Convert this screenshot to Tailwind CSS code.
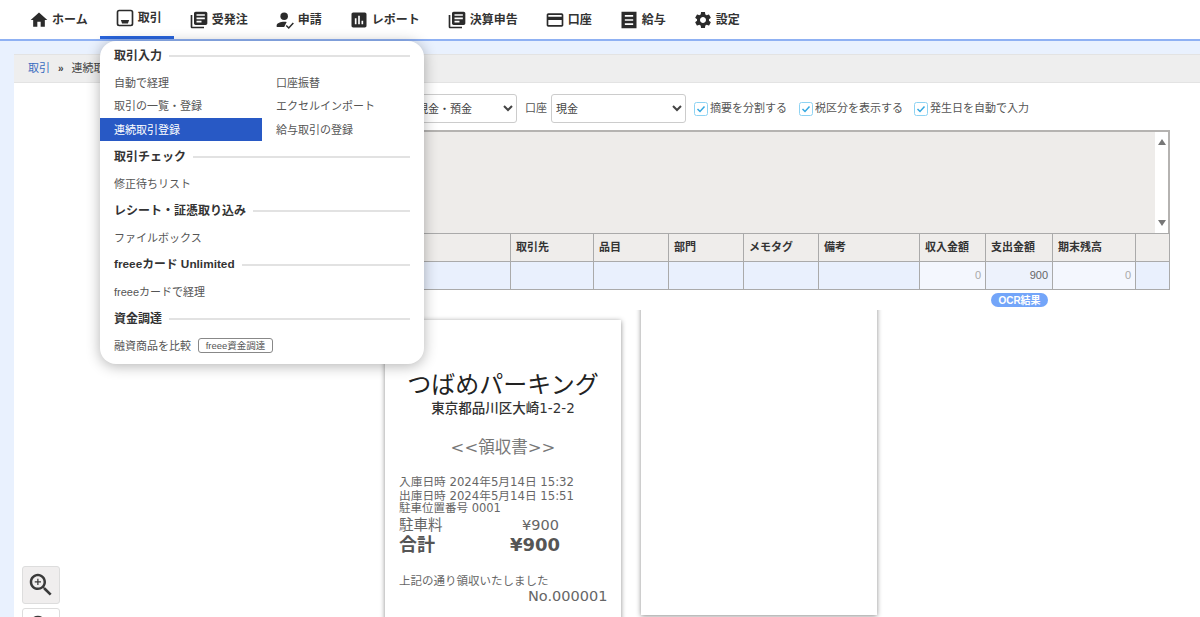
<!DOCTYPE html>
<html lang="ja">
<head>
    <meta charset="UTF-8">
    <title>連続取引登録</title>
    <script src="https://cdn.jsdelivr.net/npm/@tailwindcss/browser@4"></script>
</head>
<body class="relative h-[617px] overflow-hidden bg-[#e9f1fe] text-[11px] text-[#555] font-['Liberation_Sans','Noto_Sans_CJK_JP',sans-serif]">
    <!-- Global nav -->
    <nav class="flex h-[41px] bg-white pl-[14px] border-b-2 border-[#8fb1f3] text-xs font-bold text-[#333]">
        <a class="flex h-[39px] items-center gap-1 pl-4 pr-3">
            <svg class="w-5 h-5 -mx-px" viewBox="0 0 24 24" fill="#2b2b2b"><path d="M10 20v-6h4v6h5v-8h3L12 3 2 12h3v8z"/></svg>
            ホーム
        </a>
        <a class="flex h-[39px] items-center gap-1 pl-4 pr-3 border-b-[3px] border-[#2864dc]">
            <svg class="w-5 h-5 -mx-px" viewBox="0 0 24 24" fill="#2b2b2b"><path fill-rule="evenodd" d="M5 2h14a3 3 0 0 1 3 3v14a3 3 0 0 1-3 3H5a3 3 0 0 1-3-3V5a3 3 0 0 1 3-3zm0 2a1 1 0 0 0-1 1v14a1 1 0 0 0 1 1h14a1 1 0 0 0 1-1V5a1 1 0 0 0-1-1z"/><path d="M7 14.500h10l-1.500 4h-7z"/></svg>
            取引
        </a>
        <a class="flex h-[39px] items-center gap-1 pl-4 pr-3">
            <svg class="w-5 h-5 -mx-px" viewBox="0 0 24 24" fill="#2b2b2b"><path d="M4 6H2v14c0 1.100.9 2 2 2h14v-2H4V6zm16-4H8c-1.100 0-2 .9-2 2v12c0 1.100.9 2 2 2h12c1.100 0 2-.9 2-2V4c0-1.100-.9-2-2-2zm-1 9H9V9h10v2zm-4 4H9v-2h6v2zm4-8H9V5h10v2z"/></svg>
            受発注
        </a>
        <a class="flex h-[39px] items-center gap-1 pl-4 pr-3">
            <svg class="w-5 h-5 -mx-px" viewBox="0 0 24 24" fill="#2b2b2b"><circle cx="11" cy="7.500" r="4.500"/><path d="M2 20.500v-2c0-3 5-4.500 9-4.500 1 0 2 .1 3 .3l-3 6.200z"/><path d="M13.500 18.500l3 3 5.500-6" fill="none" stroke="#2b2b2b" stroke-width="1.800"/></svg>
            申請
        </a>
        <a class="flex h-[39px] items-center gap-1 pl-4 pr-3">
            <svg class="w-5 h-5 -mx-px" viewBox="0 0 24 24" fill="#2b2b2b"><path d="M19 3H5c-1.100 0-2 .9-2 2v14c0 1.100.9 2 2 2h14c1.100 0 2-.9 2-2V5c0-1.100-.9-2-2-2zM9 17H7v-7h2v7zm4 0h-2V7h2v10zm4 0h-2v-4h2v4z"/></svg>
            レポート
        </a>
        <a class="flex h-[39px] items-center gap-1 pl-4 pr-3">
            <svg class="w-5 h-5 -mx-px" viewBox="0 0 24 24" fill="#2b2b2b"><path d="M4 6H2v14c0 1.100.9 2 2 2h14v-2H4V6zm16-4H8c-1.100 0-2 .9-2 2v12c0 1.100.9 2 2 2h12c1.100 0 2-.9 2-2V4c0-1.100-.9-2-2-2zm-1 9H9V9h10v2zm-4 4H9v-2h6v2zm4-8H9V5h10v2z"/></svg>
            決算申告
        </a>
        <a class="flex h-[39px] items-center gap-1 pl-4 pr-3">
            <svg class="w-5 h-5 -mx-px" viewBox="0 0 24 24" fill="#2b2b2b"><path d="M20 4H4c-1.110 0-1.990.89-1.990 2L2 18c0 1.110.89 2 2 2h16c1.110 0 2-.89 2-2V6c0-1.110-.89-2-2-2zm0 14H4v-6h16v6zm0-10H4V6h16v2z"/></svg>
            口座
        </a>
        <a class="flex h-[39px] items-center gap-1 pl-4 pr-3">
            <svg class="w-5 h-5 -mx-px" viewBox="0 0 24 24" fill="#2b2b2b"><path fill-rule="evenodd" d="M3 2h18v20H3zm4 4v2h10V6zm0 5v2h10v-2zm0 5v2h10v-2z"/></svg>
            給与
        </a>
        <a class="flex h-[39px] items-center gap-1 pl-4 pr-3">
            <svg class="w-5 h-5 -mx-px" viewBox="0 0 24 24" fill="#2b2b2b"><path d="M19.140 12.940c.04-.3.06-.61.06-.94 0-.32-.02-.64-.07-.94l2.030-1.580c.18-.14.23-.41.12-.61l-1.920-3.320c-.12-.22-.37-.29-.59-.22l-2.390.96c-.5-.38-1.030-.7-1.620-.94l-.36-2.540c-.04-.24-.24-.41-.48-.41h-3.840c-.24 0-.43.17-.47.41l-.36 2.540c-.59.24-1.130.57-1.620.94l-2.390-.96c-.22-.08-.47 0-.59.22L2.740 8.870c-.12.21-.08.47.12.61l2.030 1.580c-.05.3-.09.63-.09.94s.02.64.07.94l-2.030 1.580c-.18.14-.23.41-.12.61l1.920 3.320c.12.22.37.29.59.22l2.390-.96c.5.38 1.030.7 1.620.94l.36 2.540c.05.24.24.41.48.41h3.840c.24 0 .44-.17.47-.41l.36-2.540c.59-.24 1.130-.56 1.620-.94l2.390.96c.22.08.47 0 .59-.22l1.920-3.320c.12-.22.07-.47-.12-.61l-2.010-1.580zM12 15.600c-1.980 0-3.600-1.620-3.600-3.600s1.620-3.600 3.600-3.600 3.600 1.620 3.600 3.600-1.620 3.600-3.600 3.600z"/></svg>
            設定
        </a>
    </nav>

    <!-- Page card -->
    <main class="ml-[14px] mt-[13px] h-[563px] bg-white overflow-hidden">
        <div class="flex h-[29px] items-center gap-[8px] pl-[14px] bg-[#eeeeee] border-t border-b border-[#e3e3e3] text-[#444]">
            <a class="text-[#3a6cc0]">取引</a>
            <span class="text-[10px] font-bold">»</span>
            <span>連続取引登録</span>
        </div>

        <div class="ml-[130px]">
            <!-- Filters -->
            <div class="flex h-[29px] mt-[11px] items-center">
                <select class="ml-[260px] w-[113px] h-[29px] pl-2 bg-white border border-[#ccc] rounded-[3px] text-[#444]"><option>現金・預金</option></select>
                <span class="ml-2 w-[26px]">口座</span>
                <select class="w-[135px] h-[29px] pl-0 bg-white border border-[#ccc] rounded-[3px] text-[#444]"><option>現金</option></select>
                <label class="flex items-center ml-2 w-[105px]">
                    <svg class="w-[14px] h-[14px] mr-[2px]" viewBox="0 0 14 14"><rect x=".5" y=".5" width="13" height="13" rx="2" fill="#fff" stroke="#8ed3f3"/><path d="M3.500 7l2.500 2.500L10.500 4.500" fill="none" stroke="#35a8e0" stroke-width="1.500"/></svg>
                    摘要を分割する
                </label>
                <label class="flex items-center w-[115px]">
                    <svg class="w-[14px] h-[14px] mr-[2px]" viewBox="0 0 14 14"><rect x=".5" y=".5" width="13" height="13" rx="2" fill="#fff" stroke="#8ed3f3"/><path d="M3.500 7l2.500 2.500L10.500 4.500" fill="none" stroke="#35a8e0" stroke-width="1.500"/></svg>
                    税区分を表示する
                </label>
                <label class="flex items-center">
                    <svg class="w-[14px] h-[14px] mr-[2px]" viewBox="0 0 14 14"><rect x=".5" y=".5" width="13" height="13" rx="2" fill="#fff" stroke="#8ed3f3"/><path d="M3.500 7l2.500 2.500L10.500 4.500" fill="none" stroke="#35a8e0" stroke-width="1.500"/></svg>
                    発生日を自動で入力
                </label>
            </div>

            <!-- Transaction list -->
            <div class="flex w-[1026px] h-[103px] mt-[7px] border-2 border-b-0 border-[#b5b3b1] bg-[#eeecea]">
                <div class="flex flex-col justify-between items-center w-[13px] ml-auto py-[7px] bg-white">
                    <span class="w-0 h-0 border-x-[4px] border-x-transparent border-b-[6px] border-b-[#777]"></span>
                    <span class="w-0 h-0 border-x-[4px] border-x-transparent border-t-[6px] border-t-[#777]"></span>
                </div>
            </div>
            <table class="w-[1026px] table-fixed border-collapse border border-[#aaa]">
                <colgroup>
                    <col class="w-[366px]"><col class="w-[83px]"><col class="w-[75px]"><col class="w-[75px]"><col class="w-[75px]"><col class="w-[101px]"><col class="w-[66px]"><col class="w-[67px]"><col class="w-[83px]"><col>
                </colgroup>
                <tr class="h-[28px] bg-[#efedeb] text-left text-[#333]">
                    <th class="border border-[#aaa] pl-[5px]"></th>
                    <th class="border border-[#aaa] pl-[5px]">取引先</th>
                    <th class="border border-[#aaa] pl-[5px]">品目</th>
                    <th class="border border-[#aaa] pl-[5px]">部門</th>
                    <th class="border border-[#aaa] pl-[5px]">メモタグ</th>
                    <th class="border border-[#aaa] pl-[5px]">備考</th>
                    <th class="border border-[#aaa] pl-[5px]">収入金額</th>
                    <th class="border border-[#aaa] pl-[5px]">支出金額</th>
                    <th class="border border-[#aaa] pl-[5px]">期末残高</th>
                    <th class="border border-[#aaa]"></th>
                </tr>
                <tr class="h-[28px] bg-[#e9f0fd] text-right">
                    <td class="border border-[#aaa]"></td>
                    <td class="border border-[#aaa]"></td>
                    <td class="border border-[#aaa]"></td>
                    <td class="border border-[#aaa]"></td>
                    <td class="border border-[#aaa]"></td>
                    <td class="border border-[#aaa]"></td>
                    <td class="border border-[#aaa] pr-1 bg-[#f4f7fe] text-[#aaa]">0</td>
                    <td class="border border-[#aaa] pr-1 bg-[#edf2fc] text-[#666]">900</td>
                    <td class="border border-[#aaa] pr-1 bg-[#f4f7fe] text-[#aaa]">0</td>
                    <td class="border border-[#aaa]"></td>
                </tr>
            </table>
            <div class="flex h-[20px] items-center pl-[847px]">
                <span class="flex w-[57px] h-[14px] items-center justify-center rounded-full bg-[#73a5f9] text-white text-[10px] font-bold">OCR結果</span>
            </div>

            <!-- Receipt preview -->
            <div class="flex h-[320px] items-start gap-5 pl-[241px] overflow-hidden font-['DejaVu_Sans','Noto_Sans_CJK_JP',sans-serif]">
                <div class="w-[236px] h-[400px] mt-[10px] bg-white shadow-[0_1px_5px_rgba(0,0,0,0.45)] text-[#666]">
                    <p class="h-[32px] mt-[49px] text-center text-[24px] leading-[32px] text-[#222]">つばめパーキング</p>
                    <p class="h-[14px] text-center text-[13.500px] leading-[14px] font-medium text-[#333]">東京都品川区大崎1-2-2</p>
                    <p class="h-[20px] mt-[23px] text-center text-[16.500px] leading-[20px] text-[#777]">&lt;&lt;領収書&gt;&gt;</p>
                    <div class="mt-[17px] pl-[14px]">
                        <p class="h-[13.500px] text-[11.700px] leading-[14px]">入庫日時 2024年5月14日 15:32</p>
                        <p class="h-[13.500px] text-[11.700px] leading-[14px]">出庫日時 2024年5月14日 15:51</p>
                        <p class="h-[13px] text-[11.500px] leading-[13px]">駐車位置番号 0001</p>
                        <p class="flex h-[21px] text-[14.500px] leading-[20px]"><span class="w-[123px]">駐車料</span>¥900</p>
                        <p class="flex h-[18px] text-[18px] leading-[18px] font-bold text-[#555]"><span class="w-[111px]">合計</span>¥900</p>
                        <p class="h-[14px] mt-[20px] text-[11.500px] leading-[14px]">上記の通り領収いたしました</p>
                        <p class="h-[20px] -mt-[2px] pl-[129px] text-[14.500px] leading-[20px]">No.000001</p>
                    </div>
                </div>
                <div class="w-[236px] h-[313px] -mt-[8px] bg-white shadow-[0_1px_5px_rgba(0,0,0,0.45)]"></div>
            </div>
        </div>
    </main>

    <!-- Preview zoom buttons -->
    <button class="absolute left-[22px] top-[566px] flex w-[38px] h-[38px] items-center justify-center bg-[#f0eeee] border border-[#ddd] rounded-[3px]">
        <svg class="w-[30px] h-[30px]" viewBox="0 0 24 24" fill="#3a3a3a"><path d="M15.500 14h-.79l-.28-.27C15.410 12.590 16 11.110 16 9.500 16 5.910 13.090 3 9.500 3S3 5.910 3 9.500 5.910 16 9.500 16c1.610 0 3.090-.59 4.230-1.570l.27.28v.79l5 4.990L20.490 19l-4.990-5zm-6 0C7.010 14 5 11.990 5 9.500S7.010 5 9.500 5 14 7.010 14 9.500 11.990 14 9.500 14zm.5-7H9v2H7v1h2v2h1v-2h2V9h-2V7z"/></svg>
    </button>
    <button class="absolute left-[22px] top-[608px] flex w-[38px] h-[38px] items-center justify-center bg-white border border-[#ddd] rounded-[3px]">
        <svg class="w-[30px] h-[30px]" viewBox="0 0 24 24" fill="#3a3a3a"><path d="M15.500 14h-.79l-.28-.27C15.410 12.590 16 11.110 16 9.500 16 5.910 13.090 3 9.500 3S3 5.910 3 9.500 5.910 16 9.500 16c1.610 0 3.090-.59 4.230-1.570l.27.28v.79l5 4.990L20.490 19l-4.990-5zm-6 0C7.010 14 5 11.990 5 9.500S7.010 5 9.500 5 14 7.010 14 9.500 11.990 14 9.500 14zM7 9h5v1H7z"/></svg>
    </button>

    <!-- Transactions dropdown -->
    <div class="absolute left-[100px] top-[41px] w-[324px] h-[323px] pt-[3px] bg-white rounded-[16px] shadow-[0_2px_14px_rgba(0,0,0,0.3)]">
        <div class="flex h-6 items-center gap-[7px] px-[14px] text-xs font-bold text-[#333]">取引入力<span class="flex-1 h-[2px] bg-[#e2e2e2]"></span></div>
        <div class="grid grid-cols-2 grid-rows-3 grid-flow-col w-[324px] mt-[2.500px] mb-1">
            <a class="flex h-[23.500px] items-center pl-[14px] pt-px">自動で経理</a>
            <a class="flex h-[23.500px] items-center pl-[14px] pt-px">取引の一覧・登録</a>
            <a class="flex h-[23.500px] items-center pl-[14px] pt-px bg-[#2859c5] text-white">連続取引登録</a>
            <a class="flex h-[23.500px] items-center pl-[14px] pt-px">口座振替</a>
            <a class="flex h-[23.500px] items-center pl-[14px] pt-px">エクセルインポート</a>
            <a class="flex h-[23.500px] items-center pl-[14px] pt-px">給与取引の登録</a>
        </div>
        <div class="flex h-6 items-center gap-[7px] px-[14px] text-xs font-bold text-[#333]">取引チェック<span class="flex-1 h-[2px] bg-[#e2e2e2]"></span></div>
        <a class="flex h-[23.500px] mt-[2.500px] mb-1 items-center pl-[14px] pt-px">修正待ちリスト</a>
        <div class="flex h-6 items-center gap-[7px] px-[14px] text-xs font-bold text-[#333]">レシート・証憑取り込み<span class="flex-1 h-[2px] bg-[#e2e2e2]"></span></div>
        <a class="flex h-[23.500px] mt-[2.500px] mb-1 items-center pl-[14px] pt-px">ファイルボックス</a>
        <div class="flex h-6 items-center gap-[7px] px-[14px] text-[11.800px] font-bold text-[#333]">freeeカード Unlimited<span class="flex-1 h-[2px] bg-[#e2e2e2]"></span></div>
        <a class="flex h-[23.500px] mt-[2.500px] mb-1 items-center pl-[14px] pt-px">freeeカードで経理</a>
        <div class="flex h-6 items-center gap-[7px] px-[14px] text-xs font-bold text-[#333]">資金調達<span class="flex-1 h-[2px] bg-[#e2e2e2]"></span></div>
        <a class="flex h-[23.500px] mt-[2.500px] items-center gap-[7px] pl-[14px] pt-px">融資商品を比較
            <span class="flex w-[75px] h-[15px] items-center justify-center border border-[#888] rounded-[3px] text-[9.500px]">freee資金調達</span>
        </a>
    </div>
</body>
</html>
